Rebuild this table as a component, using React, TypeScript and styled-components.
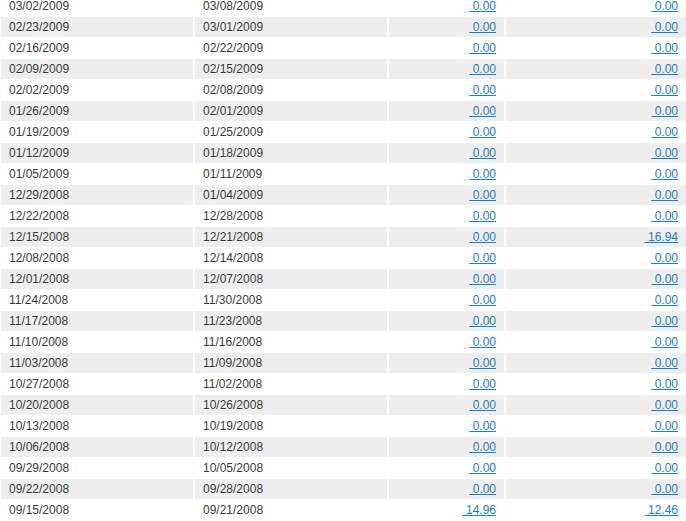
import React from "react";
import styled, { createGlobalStyle } from "styled-components";

const GlobalStyle = createGlobalStyle`
  html, body {
    margin: 0;
    padding: 0;
    background: #ffffff;
    overflow: hidden;
  }
  body {
    font-family: "Liberation Sans", Arial, sans-serif;
  }
`;

const Table = styled.table`
  border-collapse: separate;
  border-spacing: 2px 1px;
  table-layout: fixed;
  width: 689px;
  margin: -5px 0 0 -1px;
  font-family: "Liberation Sans", Arial, sans-serif;
  font-size: 12px;
  color: #3a3a3a;
`;

const Row = styled.tr<{ $shaded: boolean }>`
  background: ${(p) => (p.$shaded ? "#eeeeee" : "#ffffff")};
`;

const Cell = styled.td<{ $align?: "left" | "right" }>`
  height: 20px;
  padding: 0 8px;
  line-height: 20px;
  vertical-align: middle;
  text-align: ${(p) => p.$align ?? "left"};
  white-space: nowrap;
  overflow: hidden;
`;

const Amount = styled.a`
  color: #1a7ec6;
  text-decoration: underline;
  cursor: pointer;
`;

const rows: [string, string, string, string][] = [
  ["03/02/2009", "03/08/2009", "0.00", "0.00"],
  ["02/23/2009", "03/01/2009", "0.00", "0.00"],
  ["02/16/2009", "02/22/2009", "0.00", "0.00"],
  ["02/09/2009", "02/15/2009", "0.00", "0.00"],
  ["02/02/2009", "02/08/2009", "0.00", "0.00"],
  ["01/26/2009", "02/01/2009", "0.00", "0.00"],
  ["01/19/2009", "01/25/2009", "0.00", "0.00"],
  ["01/12/2009", "01/18/2009", "0.00", "0.00"],
  ["01/05/2009", "01/11/2009", "0.00", "0.00"],
  ["12/29/2008", "01/04/2009", "0.00", "0.00"],
  ["12/22/2008", "12/28/2008", "0.00", "0.00"],
  ["12/15/2008", "12/21/2008", "0.00", "16.94"],
  ["12/08/2008", "12/14/2008", "0.00", "0.00"],
  ["12/01/2008", "12/07/2008", "0.00", "0.00"],
  ["11/24/2008", "11/30/2008", "0.00", "0.00"],
  ["11/17/2008", "11/23/2008", "0.00", "0.00"],
  ["11/10/2008", "11/16/2008", "0.00", "0.00"],
  ["11/03/2008", "11/09/2008", "0.00", "0.00"],
  ["10/27/2008", "11/02/2008", "0.00", "0.00"],
  ["10/20/2008", "10/26/2008", "0.00", "0.00"],
  ["10/13/2008", "10/19/2008", "0.00", "0.00"],
  ["10/06/2008", "10/12/2008", "0.00", "0.00"],
  ["09/29/2008", "10/05/2008", "0.00", "0.00"],
  ["09/22/2008", "09/28/2008", "0.00", "0.00"],
  ["09/15/2008", "09/21/2008", "14.96", "12.46"],
];

export default function App() {
  return (
    <>
      <GlobalStyle />
      <Table>
        <colgroup>
          <col style={{ width: 192 }} />
          <col style={{ width: 192 }} />
          <col style={{ width: 115 }} />
          <col style={{ width: 180 }} />
        </colgroup>
        <tbody>
          {rows.map(([start, end, a, b], i) => (
            <Row key={start} $shaded={i % 2 === 1}>
              <Cell>{start}</Cell>
              <Cell>{end}</Cell>
              <Cell $align="right">
                <Amount>{"\u00a0" + a}</Amount>
              </Cell>
              <Cell $align="right">
                <Amount>{"\u00a0" + b}</Amount>
              </Cell>
            </Row>
          ))}
        </tbody>
      </Table>
    </>
  );
}
